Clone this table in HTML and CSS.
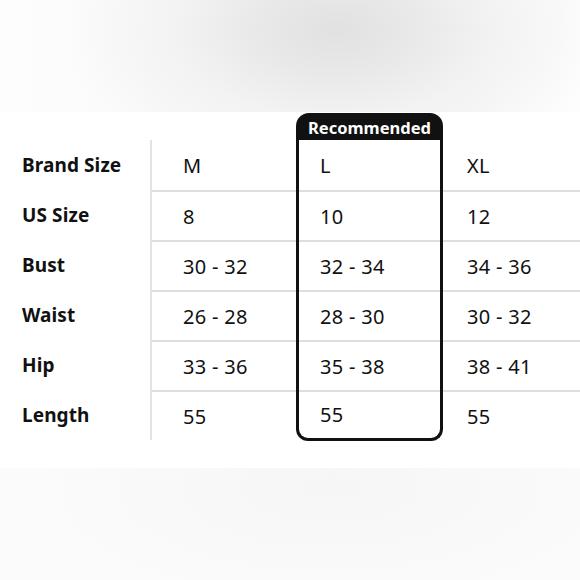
FILE: index.html
```html
<!DOCTYPE html>
<html>
<head>
<meta charset="utf-8">
<link rel="stylesheet" href="styles.css">
</head>
<body>
<div class="top"></div>
<div class="chart">
  <div class="col col-label">
    <div class="head"></div>
    <div class="cell">Brand Size</div>
    <div class="cell">US Size</div>
    <div class="cell">Bust</div>
    <div class="cell">Waist</div>
    <div class="cell">Hip</div>
    <div class="cell">Length</div>
  </div>
  <div class="col col-m">
    <div class="head"></div>
    <div class="body">
      <div class="cell">M</div>
      <div class="cell">8</div>
      <div class="cell">30 - 32</div>
      <div class="cell">26 - 28</div>
      <div class="cell">33 - 36</div>
      <div class="cell">55</div>
    </div>
  </div>
  <div class="col col-rec">
    <div class="head">Recommended</div>
    <div class="body">
      <div class="cell">L</div>
      <div class="cell">10</div>
      <div class="cell">32 - 34</div>
      <div class="cell">28 - 30</div>
      <div class="cell">35 - 38</div>
      <div class="cell last">55</div>
    </div>
  </div>
  <div class="col col-xl">
    <div class="head"></div>
    <div class="body">
      <div class="cell">XL</div>
      <div class="cell">12</div>
      <div class="cell">34 - 36</div>
      <div class="cell">30 - 32</div>
      <div class="cell">38 - 41</div>
      <div class="cell">55</div>
    </div>
  </div>
</div>
<div class="bottom"></div>
</body>
</html>
```
FILE: styles.css
```css
html, body {
  margin: 0;
  padding: 0;
  background: #ffffff;
}
body {
  width: 580px;
  height: 580px;
  overflow: hidden;
  font-family: "Noto Sans", "Open Sans", sans-serif;
  color: #111111;
}
.top {
  height: 112px;
  background:
    radial-gradient(ellipse 270px 150px at 335px 30px, #e1e1e1 0%, #e9e9e9 30%, #f3f3f3 60%, rgba(250,250,250,0) 100%),
    linear-gradient(90deg, #fdfdfd 0%, #f9f9f9 40%, #f6f6f6 80%, #fbfbfb 87%, #fdfdfd 100%);
}
.chart {
  height: 356px;
  background: #ffffff;
  display: flex;
  padding-top: 1px;
  box-sizing: border-box;
}
.bottom {
  height: 112px;
  background:
    radial-gradient(ellipse 300px 120px at 330px 20px, #f6f6f6 0%, #f9f9f9 60%, rgba(250,250,250,0) 100%),
    #fbfbfb;
}
.col {
  display: flex;
  flex-direction: column;
}
.head {
  height: 27px;
  box-sizing: border-box;
}
.cell {
  height: 50px;
  box-sizing: border-box;
  display: flex;
  align-items: center;
  font-size: 20px;
  letter-spacing: 0.3px;
}
.col-label {
  width: 150px;
}
.col-label .cell {
  padding-left: 22px;
  font-weight: 700;
  font-size: 19px;
  letter-spacing: 0.1px;
}
.body .cell + .cell {
  border-top: 2px solid #dedede;
}
.col-m {
  width: 146px;
}
.col-m .body {
  border-left: 2px solid #e2e2e2;
}
.col-m .cell {
  padding-left: 31px;
}
.col-rec {
  width: 147px;
}
.col-rec .head {
  background: #111111;
  color: #ffffff;
  border-radius: 13px 13px 0 0;
  font-weight: 700;
  font-size: 16.5px;
  display: flex;
  align-items: center;
  justify-content: center;
  padding-top: 1px;
}
.col-rec .body {
  border: 3px solid #111111;
  border-top: none;
  border-radius: 0 0 12px 12px;
}
.col-rec .cell {
  padding-left: 21px;
}
.col-rec .cell.last {
  height: 48px;
  padding-bottom: 1px;
}
.col-xl {
  flex: 1;
}
.col-xl .cell {
  padding-left: 24px;
}
```
